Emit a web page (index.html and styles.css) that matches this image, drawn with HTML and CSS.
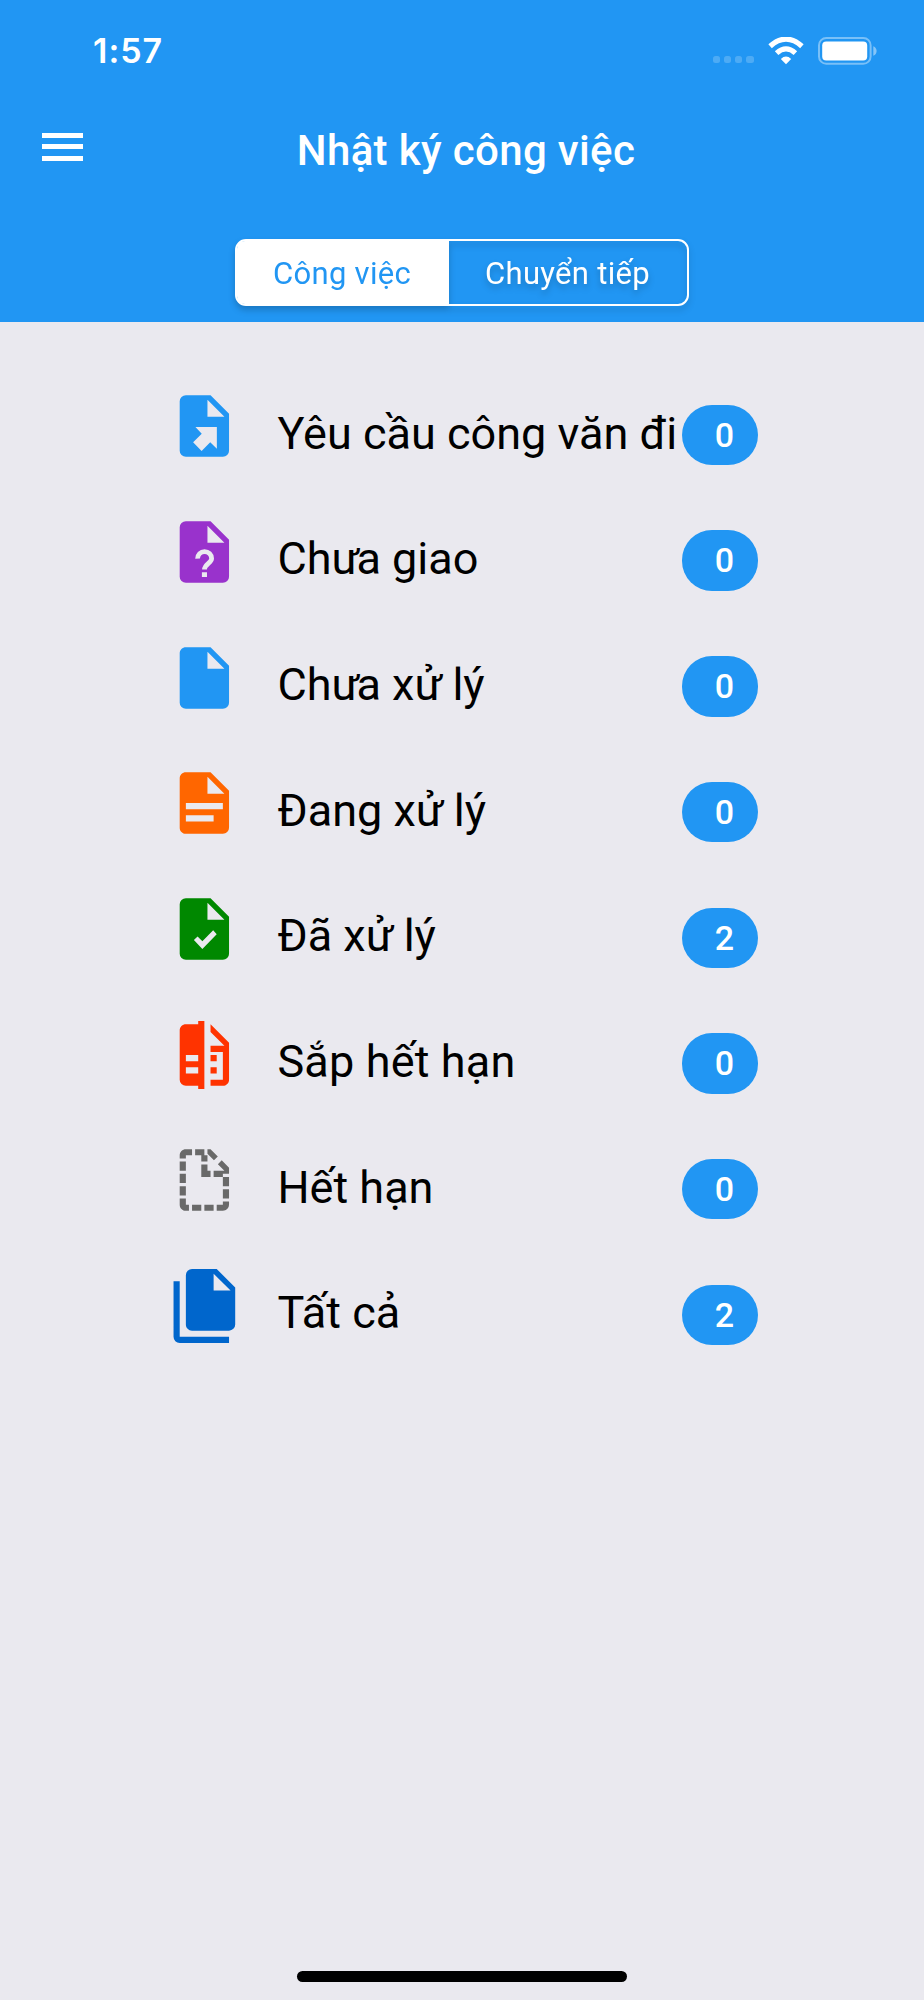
FILE: index.html
```html
<!DOCTYPE html>
<html lang="vi">
<head>
<meta charset="utf-8">
<title>Nhật ký công việc</title>
<link rel="stylesheet" href="styles.css">
</head>
<body>
<div class="screen">
  <header class="header">
    <div class="status">
      <span class="time">1:57</span>
      <div class="indicators">
        <div class="dots"><i></i><i></i><i></i><i></i></div>
        <svg class="wifi" viewBox="0 0 36 28"><path d="M18 27.2 12.8 21.9Q18 17.3 23.2 21.9Z"/><path class="arc" d="M8.6 16.2Q18 7.6 27.4 16.2M2.1 9.3Q18-5 33.9 9.3"/></svg>
        <svg class="battery" viewBox="0 0 60 28"><rect class="shell" x="1" y="1" width="51.6" height="25.8" rx="7.3"/><rect x="4.2" y="4.4" width="45" height="19" rx="4"/><path class="cap" d="M55.3 9.2Q58.6 10.6 58.6 14T55.3 18.8Z"/></svg>
      </div>
    </div>
    <div class="titlebar">
      <div class="menu"><i></i><i></i><i></i></div>
      <h1 class="title">Nhật ký công việc</h1>
    </div>
    <div class="tabs">
      <div class="tab active"><span>Công việc</span></div>
      <div class="tab"><span>Chuyển tiếp</span></div>
    </div>
  </header>
  <main class="list">
    <div class="row">
      <svg class="icon blue" viewBox="0 0 24 24"><path d="M14 2H6A2 2 0 0 0 4 4V20A2 2 0 0 0 6 22H18A2 2 0 0 0 20 20V8ZM13 3.5 18.5 9H13ZM16.05 12.3V19.4L13.9 17.3 11.1 20.1 8.35 17.3 11.15 14.5 9.1 12.3Z"/></svg>
      <span class="label">Yêu cầu công văn đi</span><span class="badge">0</span>
    </div>
    <div class="row">
      <svg class="icon purple" viewBox="0 0 24 24"><path d="M14 2H6A2 2 0 0 0 4 4V20A2 2 0 0 0 6 22H18A2 2 0 0 0 20 20V8ZM13 3.5 18.5 9H13ZM11.2 18.55V20.1H12.85V18.55Z"/><path class="question" d="M9.8 14.15A2.26 2.26 0 0 1 14.35 14.1C14.35 15.6 12.05 15.8 12.05 17.7"/></svg>
      <span class="label">Ch<span class="horn">ư</span>a giao</span><span class="badge">0</span>
    </div>
    <div class="row">
      <svg class="icon blue" viewBox="0 0 24 24"><path d="M13 9V3.5L18.5 9M6 2C4.89 2 4 2.89 4 4V20A2 2 0 0 0 6 22H18A2 2 0 0 0 20 20V8L14 2H6Z"/></svg>
      <span class="label">Ch<span class="horn">ư</span>a x<span class="hook">ử</span> lý</span><span class="badge">0</span>
    </div>
    <div class="row">
      <svg class="icon orange" viewBox="0 0 24 24"><path d="M13 9H18.5L13 3.5V9M6 2H14L20 8V20A2 2 0 0 1 18 22H6C4.89 22 4 21.1 4 20V4C4 2.89 4.89 2 6 2M15 18V16H6V18H15M18 14V12H6V14H18Z"/></svg>
      <span class="label">Đang x<span class="hook">ử</span> lý</span><span class="badge">0</span>
    </div>
    <div class="row">
      <svg class="icon green" viewBox="0 0 24 24"><path d="M14 2H6A2 2 0 0 0 4 4V20A2 2 0 0 0 6 22H18A2 2 0 0 0 20 20V8ZM13 3.5 18.5 9H13ZM8.6 15.6 9.8 14.4 11.35 16 14.85 12.4 16 13.7 11.35 18.5Z"/></svg>
      <span class="label">Đã x<span class="hook">ử</span> lý</span><span class="badge">2</span>
    </div>
    <div class="row">
      <svg class="icon red" viewBox="0 0 24 24"><path d="M10 18H6V16H10V18M10 14H6V12H10V14M10 1V2H6C4.89 2 4 2.89 4 4V20A2 2 0 0 0 6 22H10V23H12V1H10M20 8V20C20 21.11 19.11 22 18 22H14V20H18V11H14V9H18.5L14 4.5V2L20 8M16 14H14V12H16V14M16 18H14V16H16V18Z"/></svg>
      <span class="label wide">Sắp hết hạn</span><span class="badge">0</span>
    </div>
    <div class="row">
      <svg class="icon gray" viewBox="0 0 24 24"><path d="M13 9H14V11H11V7H13V9M18.5 9L16.38 6.88L17.63 5.63L20 8V10H18V11H15V9H18.5M13 3.5V2H12V4H13V6H11V4H9V2H8V4H6V5H4V4C4 2.89 4.89 2 6 2H14L16.36 4.36L15.11 5.61L13 3.5M20 20A2 2 0 0 1 18 22H16V20H18V19H20V20M18 15H20V18H18V15M12 22V20H15V22H12M8 22V20H11V22H8M6 22C4.89 22 4 21.1 4 20V18H6V20H7V22H6M4 14H6V17H4V14M4 10H6V13H4V10M18 11H20V14H18V11M4 6H6V9H4V6Z"/></svg>
      <span class="label">Hết hạn</span><span class="badge">0</span>
    </div>
    <div class="row">
      <svg class="icon navy" viewBox="0 0 24 24"><path d="M15 7H20.5L15 1.5V7M8 0H16L22 6V18A2 2 0 0 1 20 20H8C6.89 20 6 19.1 6 18V2A2 2 0 0 1 8 0M4 4V22H20V24H4A2 2 0 0 1 2 22V4H4Z"/></svg>
      <span class="label">Tất cả</span><span class="badge">2</span>
    </div>
  </main>
  <div class="home"></div>
</div>
</body>
</html>
```
FILE: styles.css
```css
* { box-sizing: border-box; }
body { margin: 0; font-family: Roboto, "Noto Sans", sans-serif; background: #eae9ef; }
.screen { width: 924px; height: 2000px; display: flex; flex-direction: column; background: #eae9ef; overflow: hidden; }
.header { height: 322.3px; flex: none; background: #2196f3; color: #fff; display: flex; flex-direction: column; }
.status { height: 101px; display: flex; justify-content: space-between; padding: 0 46.5px 0 93px; }
.time { font: 600 34px/40px Inter, sans-serif; margin-top: 31px; letter-spacing: 1px; }
.indicators { display: flex; margin-top: 37px; height: 28px; }
.dots { display: flex; gap: 3.7px; margin: 19px 14px 0 0; }
.dots i { width: 7.4px; height: 7.4px; border-radius: 2.5px; background: #fff; opacity: .2; }
.wifi { width: 36px; height: 28px; fill: #fff; margin-right: 14px; }
.arc { fill: none; stroke: #fff; stroke-width: 5.2; }
.battery { width: 60px; height: 28px; fill: #fff; }
.shell { fill: none; stroke: #fff; stroke-width: 2; opacity: .4; }
.cap { opacity: .45; }
.titlebar { height: 138px; display: grid; grid-template-columns: 125px 682px 117px; align-items: start; }
.menu { margin: 32px 0 0 42px; width: 41px; display: flex; flex-direction: column; gap: 6.3px; }
.menu i { height: 5px; background: #fff; }
.title { margin: 24px 0 0; text-align: center; font-size: 42px; line-height: 52px; font-weight: 500; letter-spacing: .35px; }
.tabs { width: 454px; height: 67px; margin-left: 235px; display: flex; border: 2px solid #fff; border-radius: 11px; filter: drop-shadow(0 4px 3px rgba(0,0,0,.2)); }
.tab { flex: 1; display: flex; justify-content: center; align-items: center; padding: 2px 1px 0 0; font-size: 31px; line-height: 40px; letter-spacing: .3px; }
.tab.active { flex: 0 0 212px; padding-right: 2px; background: #fff; color: #2196f3; border-radius: 8px 0 0 8px; }
.list { padding: 49.7px 166px 0 167px; flex: 1; }
.row { height: 125.7px; display: flex; align-items: flex-start; }
.icon { width: 74px; height: 74px; margin-top: 17.2px; flex: none; fill: currentColor; fill-rule: evenodd; overflow: visible; }
.icon path { transform: translate(.12px, 0); }
.label { width: 404px; margin: 31.7px 0 0 37px; text-indent: -.5px; font-size: 45px; line-height: 60px; color: #000; white-space: nowrap; }
.label.wide { letter-spacing: .15px; }
.horn { letter-spacing: -3px; }
.hook { letter-spacing: -1px; }
.badge { width: 76px; height: 60.4px; flex: none; margin-top: 32.8px; padding-left: 9px; border-radius: 30px; background: #2196f3; color: #fff; font-size: 34px; font-weight: 500; line-height: 61px; text-align: center; }
.question { fill: none; stroke: #eae9ef; stroke-width: 1.55; }
.blue { color: #2196f3; }
.purple { color: #9932cc; }
.orange { color: #ff6600; }
.green { color: #008800; }
.red { color: #ff3300; }
.gray { color: #696969; }
.navy { color: #0066cc; }
.home { width: 330px; height: 11.3px; margin: 0 0 18px 297px; border-radius: 6px; background: #000; flex: none; }
```
